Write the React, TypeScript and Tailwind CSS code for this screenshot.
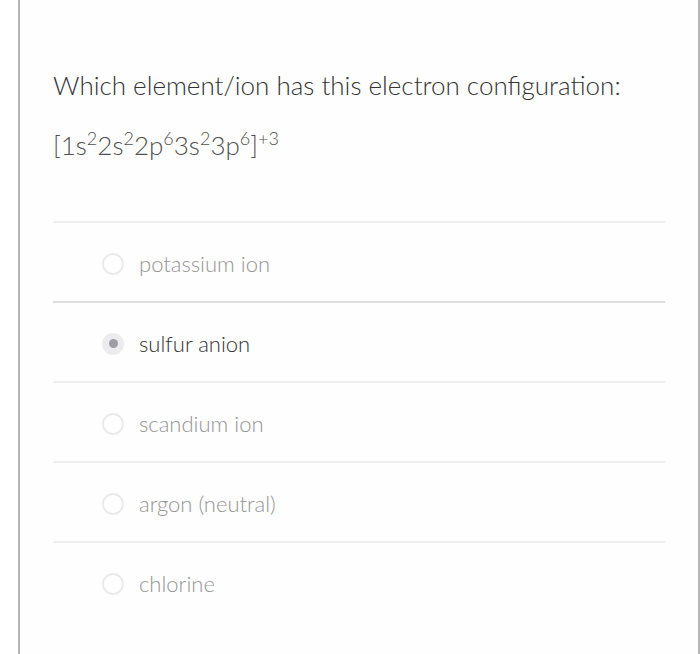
const options = [
  { label: "potassium ion", selected: false },
  { label: "sulfur anion", selected: true },
  { label: "scandium ion", selected: false },
  { label: "argon (neutral)", selected: false },
  { label: "chlorine", selected: false },
];

function Radio({ selected }: { selected: boolean }) {
  if (selected) {
    return (
      <span className="flex items-center justify-center w-[22px] h-[22px] rounded-full bg-[#ececef] shrink-0">
        <span className="w-[9px] h-[9px] rounded-full bg-[#9d9da3]" />
      </span>
    );
  }
  return <span className="w-[22px] h-[22px] rounded-full border-2 border-[#ebebeb] bg-white shrink-0" />;
}

function Sup({ children }: { children: string }) {
  return <span className="relative -top-[10px] text-[18px]">{children}</span>;
}

export default function App() {
  return (
    <div
      className="h-[654px] w-[700px] bg-white overflow-hidden"
      style={{ fontFamily: "Lato, 'Noto Sans', sans-serif" }}
    >
      <div className="ml-[18px] h-full w-[682px] border-x-2 border-[#b4b4b4] bg-[#fefefe] px-[33px] pt-[69px] font-light">
        {/* Question */}
        <p className="text-[26px] leading-[32px] text-[#333]">
          Which element/ion has this electron configuration:
        </p>
        <p className="mt-[28px] text-[26px] leading-[32px] text-[#505050]">
          [1s<Sup>2</Sup>2s<Sup>2</Sup>2p<Sup>6</Sup>3s<Sup>2</Sup>3p<Sup>6</Sup>]<Sup>+3</Sup>
        </p>

        {/* Options */}
        <div className="mt-[57px] border-t-2 border-[#f0f0f0]">
          {options.map((o, i) => (
            <div
              key={o.label}
              className={`flex items-center gap-[15px] h-[80px] pl-[49px] pt-[3px] border-b-2 ${
                i === 0 ? "border-[#dedede]" : i === options.length - 1 ? "border-transparent" : "border-[#f0f0f0]"
              }`}
            >
              <Radio selected={o.selected} />
              <span className={`text-[22px] ${o.selected ? "text-[#333]" : "text-[#959595]"}`}>{o.label}</span>
            </div>
          ))}
        </div>
      </div>
    </div>
  );
}
